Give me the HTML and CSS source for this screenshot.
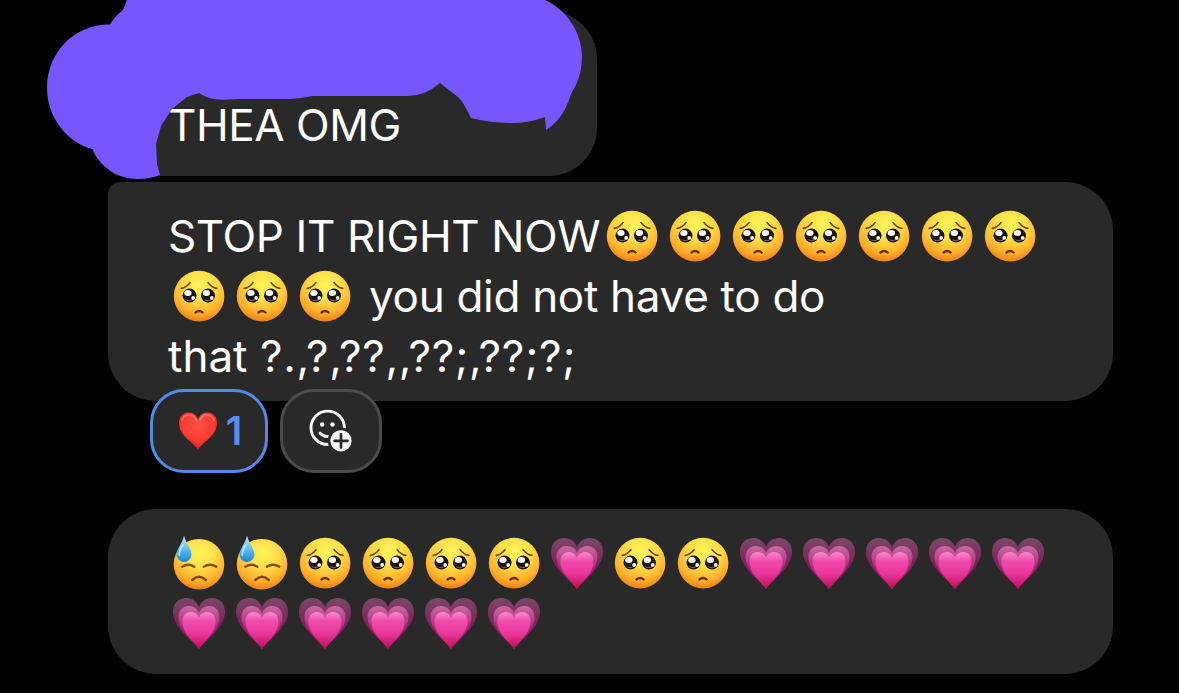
FILE: index.html
```
<!DOCTYPE html>
<html lang="en">
<head>
<meta charset="utf-8">
<title>Chat</title>
<link rel="stylesheet" href="styles.css">
</head>
<body>
<svg class="defs" aria-hidden="true">
  <defs>
    <radialGradient id="skin" cx=".52" cy=".28" r=".74">
      <stop offset="0" stop-color="#fff45c"/><stop offset=".4" stop-color="#ffde48"/><stop offset=".75" stop-color="#ffb02c"/><stop offset="1" stop-color="#e87c16"/>
    </radialGradient>
    <linearGradient id="drop" x1="0" y1="0" x2="0" y2="1">
      <stop offset="0" stop-color="#c9edfa"/><stop offset=".5" stop-color="#62bfeb"/><stop offset="1" stop-color="#1787cf"/>
    </linearGradient>
    <linearGradient id="h1" x1="0" y1="0" x2="0" y2="1">
      <stop offset="0" stop-color="#7b4868"/><stop offset=".5" stop-color="#7d2259"/><stop offset="1" stop-color="#b01058"/>
    </linearGradient>
    <linearGradient id="h2" x1="0" y1="0" x2="0" y2="1">
      <stop offset="0" stop-color="#c96aa2"/><stop offset=".5" stop-color="#a82a7a"/><stop offset="1" stop-color="#bd1261"/>
    </linearGradient>
    <linearGradient id="h3" x1="0" y1="0" x2="0" y2="1">
      <stop offset="0" stop-color="#f98bcb"/><stop offset=".25" stop-color="#f04bac"/><stop offset=".6" stop-color="#e9359b"/><stop offset="1" stop-color="#b80d50"/>
    </linearGradient>
    <radialGradient id="red" cx=".5" cy=".35" r=".65">
      <stop offset="0" stop-color="#ff5145"/><stop offset=".65" stop-color="#fa3a30"/><stop offset="1" stop-color="#d91f1c"/>
    </radialGradient>
    <g id="eye">
      <circle r="7" fill="#17120f"/>
      <path d="M-4.5 3.8Q0 6.8 4.5 3.3Q0 5 -4.5 3.8Z" fill="#8b8791"/>
      <ellipse cx="-1.6" cy="-2.6" rx="3.7" ry="3" fill="#fff"/>
      <circle cx="3.7" cy="2.3" r="1.9" fill="#fff"/>
    </g>
    <symbol id="pleading" viewBox="-30.8 -30 63 60">
      <circle cx=".3" cy=".1" r="25.3" fill="url(#skin)"/>
      <use href="#eye" x="-9.3" y="-.4"/><use href="#eye" x="9.2" y="-.4"/>
      <path d="M-17.5-7.6Q-12-8.6-8.8-13.4M18-7.6Q12.5-8.6 9.3-13.4" fill="none" stroke="#79400c" stroke-width="1.7" stroke-linecap="round"/>
      <path d="M-3.3 16.5Q.3 13.5 3.8 16.5" fill="none" stroke="#653009" stroke-width="2.300" stroke-linecap="round"/>
    </symbol>
    <symbol id="sweat" viewBox="-30.8 -30 63 60">
      <circle cx=".2" cy="1.2" r="25.3" fill="url(#skin)"/>
      <path d="M-16.5 3.7Q-10.500 0-4.500 3.700M5 3.700Q11 0 17.500 3.700" fill="none" stroke="#85500f" stroke-width="2.500" stroke-linecap="round"/>
      <path d="M-6.500 17Q.2 10.500 7 17" fill="none" stroke="#85450d" stroke-width="2.500" stroke-linecap="round"/>
      <path d="M-14.800-27.500C-13-20-7.300-14-7.300-8.500A7.500 7.500 0 0 1-22.300-8.500C-22.300-14-16-20-14.800-27.500Z" fill="url(#drop)"/>
      <path d="M-16-18Q-20-12-19.500-8" fill="none" stroke="#e1f7ff" stroke-opacity=".65" stroke-width="1.800" stroke-linecap="round"/>
    </symbol>
    <symbol id="growing" viewBox="-31 -30 63 60">
      <path d="M0 26C-5 18-26 5-26-11C-26-20-20-25-13-25C-6-25-2-21 0-16C2-21 6-25 13-25C20-25 26-20 26-11C26 5 5 18 0 26Z" fill="url(#h1)"/>
      <path d="M0 26C-5 18-20.500 8-20.500-6C-20.500-13-16-17-10.500-17C-5-17-1.500-14 0-10C1.500-14 5-17 10.500-17C16-17 20.500-13 20.500-6C20.500 8 5 18 0 26Z" fill="url(#h2)"/>
      <path d="M0 26C-4 19-16.500 11-16.500-1.500C-16.500-7.500-13-11-8.500-11C-4-11-1-8.500 0-5.500C1-8.500 4-11 8.500-11C13-11 16.500-7.500 16.500-1.500C16.500 11 4 19 0 26Z" fill="url(#h3)"/>
    </symbol>
  </defs>
</svg>

<main class="chat">
  <section class="bubble bubble-first">
    <p class="line"><span class="thea">THEA OMG</span></p>
  </section>

  <section class="bubble bubble-second">
    <p class="line"><span class="stop">STOP IT RIGHT NOW</span><svg class="emoji"><use href="#pleading"/></svg><svg class="emoji"><use href="#pleading"/></svg><svg class="emoji"><use href="#pleading"/></svg><svg class="emoji"><use href="#pleading"/></svg><svg class="emoji"><use href="#pleading"/></svg><svg class="emoji"><use href="#pleading"/></svg><svg class="emoji"><use href="#pleading"/></svg></p>
    <p class="line"><svg class="emoji"><use href="#pleading"/></svg><svg class="emoji"><use href="#pleading"/></svg><svg class="emoji"><use href="#pleading"/></svg><span class="you">you did not have to do</span></p>
    <p class="line"><span>that </span><span class="marks">?.,?,??,,??;,??;?;</span></p>
  </section>

  <div class="reactions">
    <button class="pill pill-active">
      <svg class="heart" viewBox="0 0 40 40"><path d="M20 39C16 31 1 25 1 12C1 5.500 5.500 1.500 10.500 1.500C15.500 1.500 18.500 4.500 20 8.500C21.500 4.500 24.500 1.500 29.500 1.500C34.500 1.500 39 5.500 39 12C39 25 24 31 20 39Z" fill="url(#red)"/><path d="M4 9Q6 4 11 4T18 9M22 9Q24 4 29 4T36 9" fill="none" stroke="#ff9b94" stroke-opacity=".45" stroke-width="2" stroke-linecap="round"/></svg>
      <span class="count">1</span>
    </button>
    <button class="pill pill-add" aria-label="Add reaction">
      <svg class="add-icon" viewBox="0 0 44 44">
        <circle cx="18.700" cy="18.800" r="16.700" fill="none" stroke="#f7f7f7" stroke-width="2.900"/>
        <circle cx="13.200" cy="15.500" r="2.200" fill="#f7f7f7"/><circle cx="23.500" cy="15.500" r="2.200" fill="#f7f7f7"/>
        <path d="M11 24Q14.500 28.300 22 27.500" fill="none" stroke="#f7f7f7" stroke-width="2.800" stroke-linecap="round"/>
        <circle cx="32" cy="31.800" r="13.300" fill="#292929"/>
        <circle cx="32" cy="31.800" r="10.600" fill="#f7f7f7"/>
        <path d="M32 25.300V38.300M25.500 31.800H38.500" stroke="#292929" stroke-width="2.700" stroke-linecap="round"/>
      </svg>
    </button>
  </div>

  <section class="bubble bubble-third">
    <p class="line"><svg class="emoji"><use href="#sweat"/></svg><svg class="emoji"><use href="#sweat"/></svg><svg class="emoji"><use href="#pleading"/></svg><svg class="emoji"><use href="#pleading"/></svg><svg class="emoji"><use href="#pleading"/></svg><svg class="emoji"><use href="#pleading"/></svg><svg class="emoji"><use href="#growing"/></svg><svg class="emoji"><use href="#pleading"/></svg><svg class="emoji"><use href="#pleading"/></svg><svg class="emoji"><use href="#growing"/></svg><svg class="emoji"><use href="#growing"/></svg><svg class="emoji"><use href="#growing"/></svg><svg class="emoji"><use href="#growing"/></svg><svg class="emoji"><use href="#growing"/></svg></p>
    <p class="line"><svg class="emoji"><use href="#growing"/></svg><svg class="emoji"><use href="#growing"/></svg><svg class="emoji"><use href="#growing"/></svg><svg class="emoji"><use href="#growing"/></svg><svg class="emoji"><use href="#growing"/></svg><svg class="emoji"><use href="#growing"/></svg></p>
  </section>
</main>

<svg class="scribble" viewBox="0 0 600 190" aria-hidden="true">
  <path d="M127 0L123 10Q115 16 110 24.500C75 24 47 52 47 88C47 118 68 143 92.500 149C99 166 117 179 138 179Q150 179 160 175L157 164L156 144L161 126L172 109L187 97L199 93Q208 99.500 222 99.700L240 99H290Q302 98.500 312 96H408Q425 96 440 83L458 97Q463 102 467 110L471 118Q491 123 512 123Q529 123 545 117L546 130Q563 119 570 97Q572 91 576 85C580 76 582 67 582 57C582 33 567 10 545 0Z" fill="#7856ff"/>
</svg>
</body>
</html>
```
FILE: styles.css
```
* {
  box-sizing: border-box;
}

body {
  margin: 0;
  width: 1179px;
  height: 693px;
  overflow: hidden;
  background: #000;
  color: #fff;
  font-family: Inter, "Liberation Sans", sans-serif;
  font-size: 44px;
}

.defs {
  position: absolute;
  width: 0;
  height: 0;
}

.chat {
  display: flex;
  flex-direction: column;
  align-items: flex-start;
  padding: 11px 66px 0 108px;
}

.bubble {
  width: 1005px;
  padding: 24px 20px 0 60px;
  border-radius: 48px;
  background: #292929;
}

.bubble-first {
  width: 489px;
  height: 165px;
  padding-top: 84px;
  border-bottom-left-radius: 12px;
}

.bubble-second {
  height: 219px;
  margin-top: 6px;
  border-top-left-radius: 12px;
}

.bubble-third {
  height: 165px;
  margin-top: 36px;
}

.line {
  display: flex;
  align-items: center;
  height: 60px;
  margin: 0;
  line-height: 60px;
  white-space: pre;
}

.emoji {
  flex: none;
  width: 63px;
  height: 60px;
}

.thea {
  letter-spacing: -0.45px;
}

.stop {
  flex: none;
  width: 432.5px;
  letter-spacing: -0.37px;
}

.you {
  margin-left: 12px;
  letter-spacing: -0.3px;
}

.marks {
  letter-spacing: 0.75px;
}

.reactions {
  display: flex;
  gap: 12px;
  margin: -12px 0 0 42px;
}

.pill {
  display: flex;
  align-items: center;
  justify-content: center;
  width: 102px;
  height: 84px;
  padding: 0;
  border: 3px solid #4b4b4b;
  border-radius: 34px;
  background: #292929;
}

.pill-active {
  gap: 8px;
  width: 118px;
  padding-left: 2px;
  border-color: #5688e8;
}

.heart {
  width: 40px;
  height: 40px;
}

.count {
  color: #5a8df0;
  font: 600 39px/40px Inter, sans-serif;
}

.add-icon {
  width: 44px;
  height: 44px;
}

.scribble {
  position: absolute;
  top: 0;
  left: 0;
  width: 600px;
  height: 190px;
}
```
